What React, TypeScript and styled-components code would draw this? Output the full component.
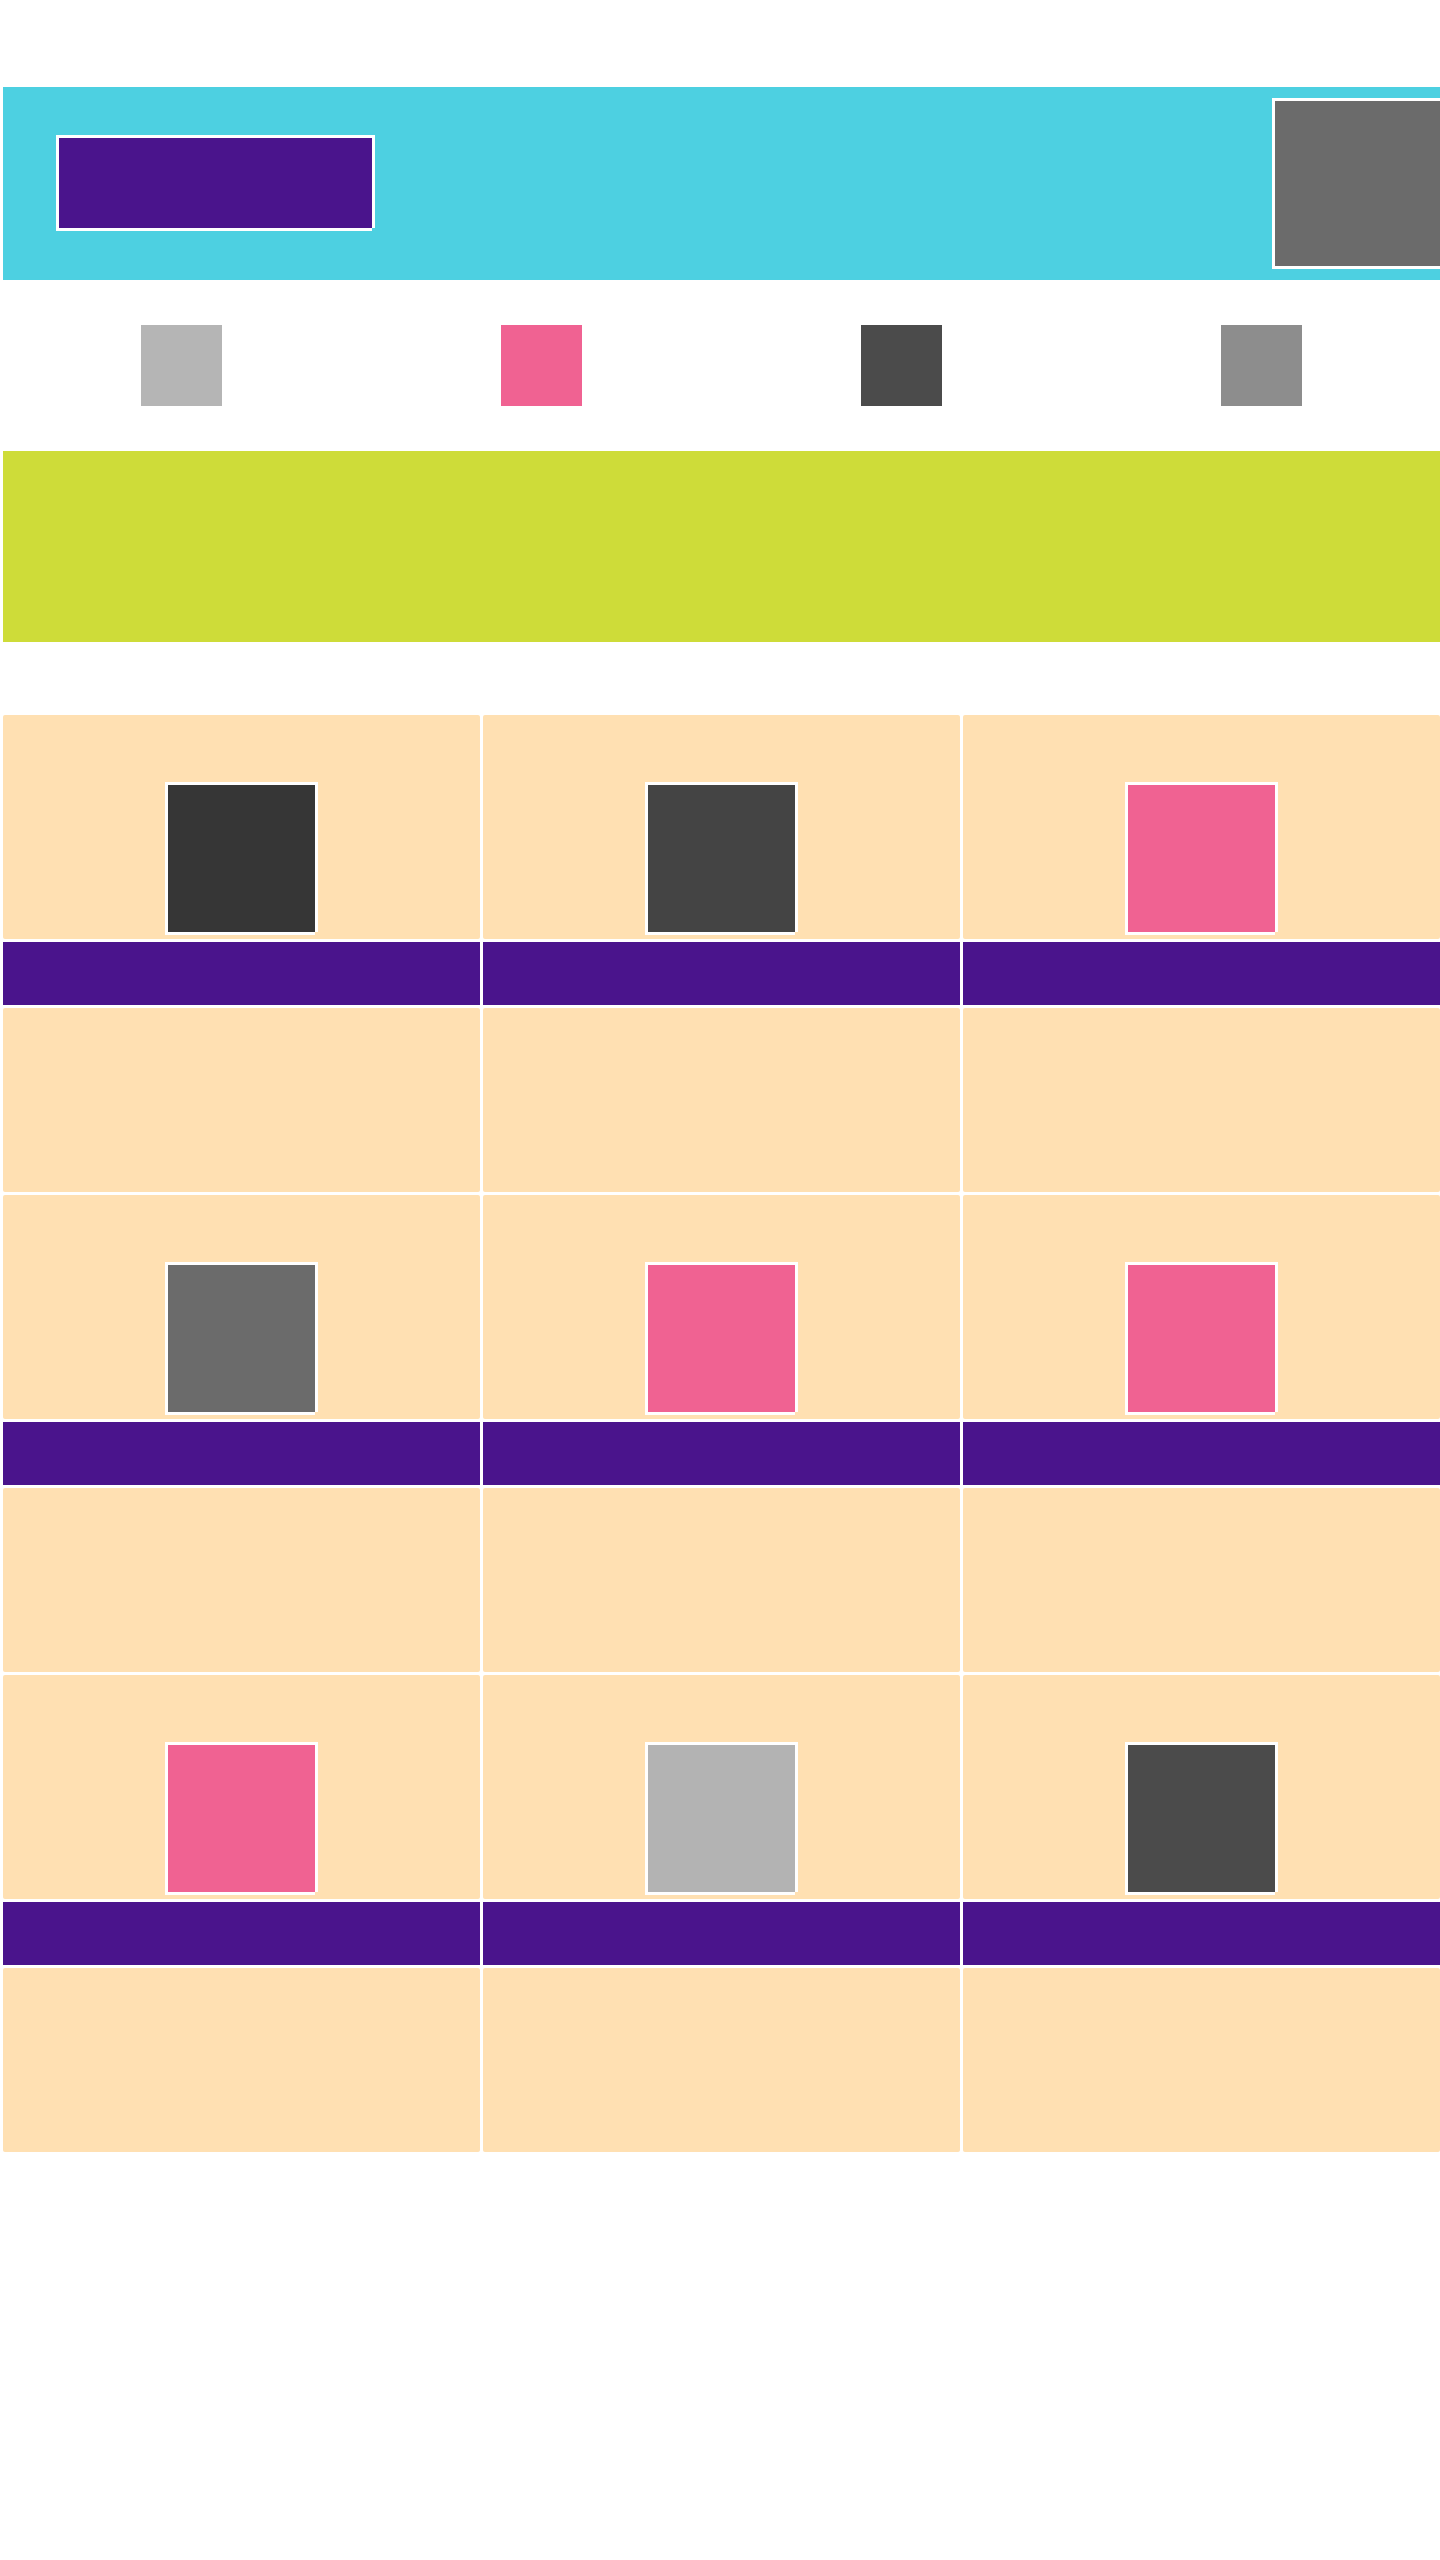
import React from "react";
import styled, { createGlobalStyle } from "styled-components";

const GlobalStyle = createGlobalStyle`
  html, body {
    margin: 0;
    padding: 0;
    background: #ffffff;
    overflow-x: hidden;
    font-family: "Liberation Sans", Arial, sans-serif;
  }
  * { box-sizing: border-box; }
`;

const COLORS = {
  cyan: "#4DD0E1",
  purple: "#4A148C",
  lime: "#CEDC39",
  peach: "#FFE0B2",
  pink: "#F06292",
};

const Page = styled.div`
  display: flex;
  flex-direction: column;
  padding: 87px 0 408px 3px;
  width: 1440px;
`;

const Header = styled.header`
  height: 193px;
  background: ${COLORS.cyan};
  display: flex;
  align-items: flex-start;
  justify-content: space-between;
  padding-left: 53px;
`;

const framed = `
  border-top: 3px solid #ffffff;
  border-left: 3px solid #ffffff;
  box-shadow: 3px 0 0 #ffffff, 0 3px 0 #ffffff;
`;

const Brand = styled.div`
  width: 316px;
  height: 93px;
  margin-top: 48px;
  background: ${COLORS.purple};
  ${framed}
`;

const Avatar = styled.div`
  width: 168px;
  height: 168px;
  margin-top: 11px;
  background: #6b6b6b;
  ${framed}
`;

const SwatchRow = styled.nav`
  height: 171px;
  display: flex;
  align-items: center;
  gap: 279px;
  padding-left: 138px;
`;

const Swatch = styled.div<{ $color: string }>`
  width: 81px;
  height: 81px;
  background: ${(p) => p.$color};
`;

const Banner = styled.section`
  height: 191px;
  background: ${COLORS.lime};
`;

const Grid = styled.main`
  margin-top: 73px;
  display: grid;
  grid-template-columns: repeat(3, 477px);
  gap: 3px;
`;

const Card = styled.article`
  display: flex;
  flex-direction: column;
  gap: 3px;
`;

const Media = styled.div`
  height: 224px;
  background: ${COLORS.peach};
  border-radius: 2px;
  display: flex;
  justify-content: center;
  align-items: flex-start;
  padding-top: 67px;
`;

const Thumb = styled.div<{ $color: string }>`
  width: 150px;
  height: 150px;
  margin-right: 3px;
  background: ${(p) => p.$color};
  ${framed}
`;

const TitleBar = styled.div`
  height: 63px;
  background: ${COLORS.purple};
`;

const Body = styled.div`
  height: 184px;
  background: ${COLORS.peach};
  border-radius: 2px;
`;

const swatches = ["#B5B5B5", COLORS.pink, "#4B4B4B", "#8D8D8D"];

const cards = [
  "#363636",
  "#444444",
  COLORS.pink,
  "#6B6B6B",
  COLORS.pink,
  COLORS.pink,
  COLORS.pink,
  "#B3B3B3",
  "#4B4B4B",
];

export default function App() {
  return (
    <>
      <GlobalStyle />
      <Page>
        <Header>
          <Brand />
          <Avatar />
        </Header>
        <SwatchRow>
          {swatches.map((c, i) => (
            <Swatch key={i} $color={c} />
          ))}
        </SwatchRow>
        <Banner />
        <Grid>
          {cards.map((c, i) => (
            <Card key={i}>
              <Media>
                <Thumb $color={c} />
              </Media>
              <TitleBar />
              <Body />
            </Card>
          ))}
        </Grid>
      </Page>
    </>
  );
}
